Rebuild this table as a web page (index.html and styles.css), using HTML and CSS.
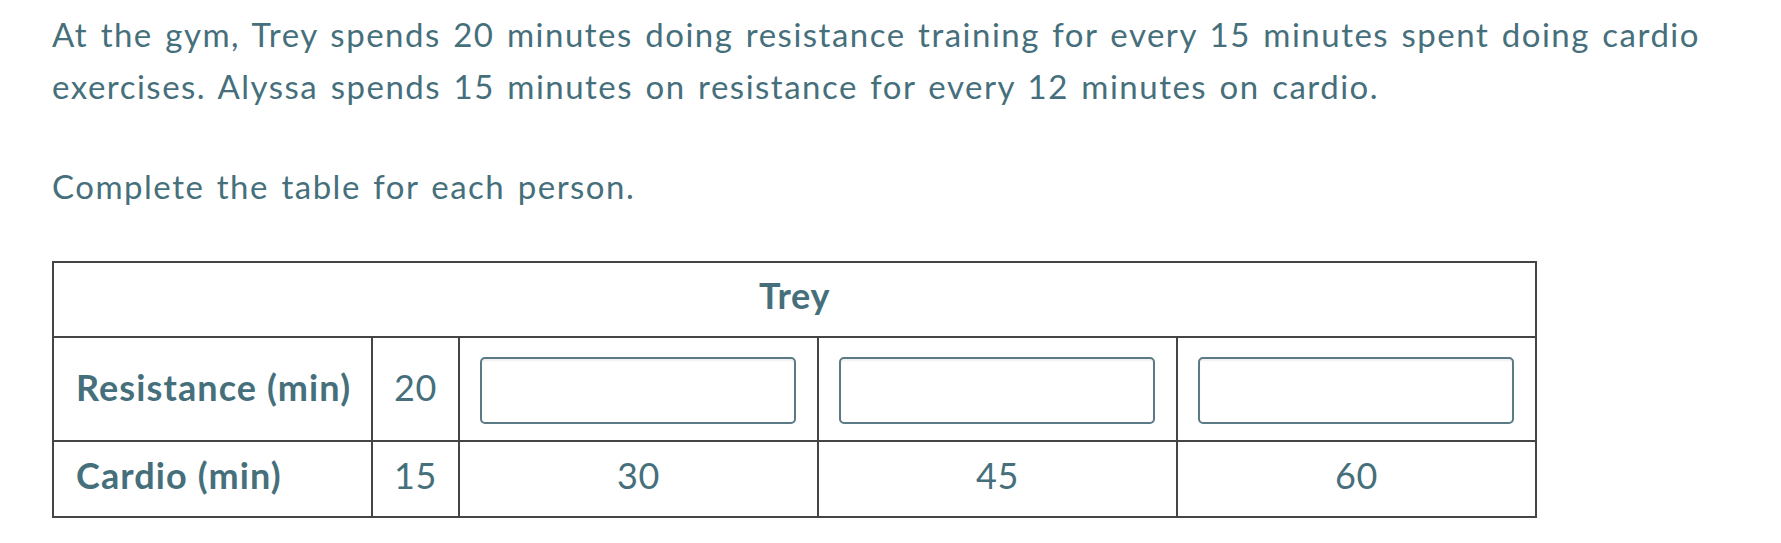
FILE: index.html
```html
<!DOCTYPE html>
<html>
<head>
<meta charset="utf-8">
<link rel="stylesheet" href="styles.css">
</head>
<body>
<div class="page">
  <p class="intro">At the gym, Trey spends 20 minutes doing resistance training for every 15 minutes spent doing cardio exercises. Alyssa spends 15 minutes on resistance for every 12 minutes on cardio.</p>
  <p class="prompt">Complete the table for each person.</p>
  <table class="ratio">
    <colgroup>
      <col class="c-label">
      <col class="c-given">
      <col class="c-wide">
      <col class="c-wide">
      <col class="c-wide">
    </colgroup>
    <tr class="r-head"><th colspan="5">Trey</th></tr>
    <tr class="r-res">
      <th class="label">Resistance (min)</th>
      <td class="num">20</td>
      <td class="blank"><div class="answer"></div></td>
      <td class="blank"><div class="answer"></div></td>
      <td class="blank"><div class="answer"></div></td>
    </tr>
    <tr class="r-car">
      <th class="label">Cardio (min)</th>
      <td class="num">15</td>
      <td class="num">30</td>
      <td class="num">45</td>
      <td class="num">60</td>
    </tr>
  </table>
</div>
</body>
</html>
```

FILE: styles.css
```css
html, body {
  margin: 0;
  padding: 0;
  background: #ffffff;
}
.page {
  padding: 8px 0 0 52px;
  font-family: "Lato", "Liberation Sans", sans-serif;
  color: #466f7c;
}
.intro, .prompt {
  margin: 0;
  font-size: 33px;
  line-height: 52px;
  letter-spacing: 1.5px;
  word-spacing: 2.5px;
  width: 1700px;
}
.prompt {
  margin-top: 48px;
}
.ratio {
  margin-top: 49px;
  border-collapse: collapse;
  table-layout: fixed;
  width: 1483px;
  font-size: 36px;
  letter-spacing: 0.6px;
}
.c-label { width: 319px; }
.c-given { width: 87px; }
.c-wide { width: 359px; }
.ratio th, .ratio td {
  border: 2px solid #454545;
  padding: 0;
  text-align: center;
  vertical-align: middle;
}
.ratio th { font-weight: 700; }
.r-head { height: 75px; }
.r-res { height: 104px; }
.r-car { height: 76px; }
.r-head th {
  padding-bottom: 9px;
}
.ratio th.label {
  text-align: left;
  padding-left: 22px;
  letter-spacing: 1.1px;
}
.ratio td {
  font-weight: 400;
}
.r-res th.label, .r-res td.num {
  padding-bottom: 5px;
}
.r-car th.label, .r-car td.num {
  padding-bottom: 9px;
}
.ratio td.blank {
  padding: 19px 21px 14px 20px;
  vertical-align: top;
}
.answer {
  box-sizing: border-box;
  height: 67px;
  border: 2px solid #5a7a85;
  border-radius: 5px;
  box-shadow: inset 0 2px 2px rgba(0, 0, 0, 0.06);
  background: #ffffff;
}
```
